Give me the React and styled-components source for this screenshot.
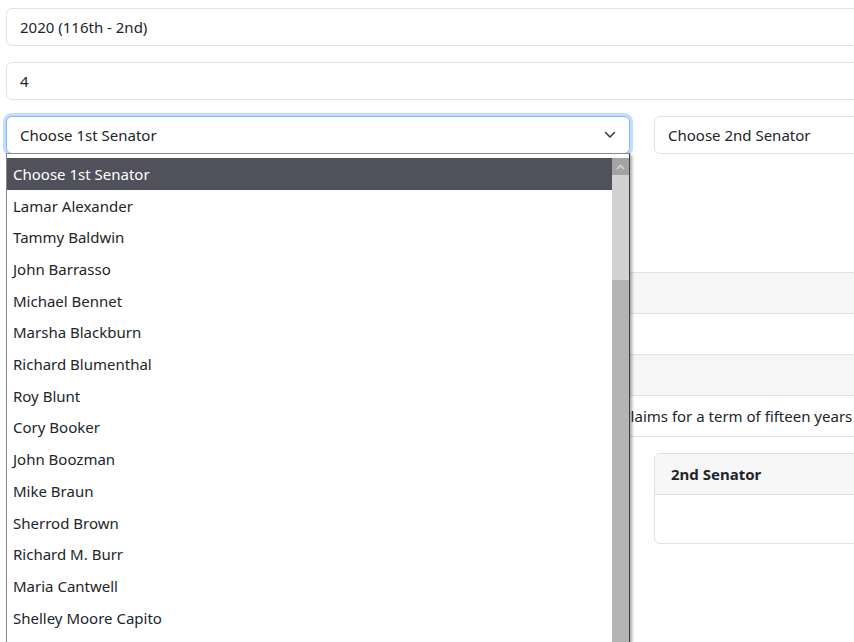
import React from "react";
import styled, { createGlobalStyle } from "styled-components";

const GlobalStyle = createGlobalStyle`
  html { overflow: hidden; }
  html, body { margin: 0; padding: 0; background: #fff; }
  body {
    font-family: "Noto Sans", "Open Sans", sans-serif;
    font-size: 15px;
    color: #212529;
    min-height: 100vh;
  }
  * { box-sizing: border-box; }
`;

const Page = styled.div`
  width: 1272px;
  padding: 8px 0 0 6px;
  display: flex;
  flex-direction: column;
`;

const Field = styled.div`
  height: 38px;
  border: 1px solid #dee2e6;
  border-radius: 6px;
  padding: 0 13px;
  display: flex;
  align-items: center;
  margin-bottom: 16px;
  background: #fff;
`;

const Columns = styled.div`
  display: grid;
  grid-template-columns: 624px 624px;
  column-gap: 24px;
  align-items: start;
`;

const SelectWrap = styled.div`
  position: relative;
`;

const Select = styled.div`
  height: 38px;
  border: 1px solid ${(p) => (p.$focused ? "#86b7fe" : "#dee2e6")};
  box-shadow: ${(p) => (p.$focused ? "0 0 0 3px rgba(13,110,253,0.25)" : "none")};
  border-radius: 6px;
  padding: 0 13px;
  display: flex;
  align-items: center;
  justify-content: space-between;
  background: #fff;
`;

const Chevron = styled.svg`
  width: 16px;
  height: 12px;
  margin-right: -2px;
`;

const Dropdown = styled.div`
  position: absolute;
  left: 0;
  top: 37px;
  width: 624px;
  height: 520px;
  background: #fff;
  border: 1px solid #8a8a8a;
  border-right-color: #3c3c3c;
  box-shadow: 2px 2px 3px rgba(0, 0, 0, 0.35);
  padding-top: 4px;
  display: flex;
  z-index: 10;
`;

const OptionList = styled.div`
  flex: 1;
  display: flex;
  flex-direction: column;
`;

const Option = styled.div`
  height: 31.71px;
  flex: none;
  display: flex;
  align-items: center;
  padding-left: 6px;
  background: ${(p) => (p.$active ? "#51515b" : "transparent")};
  color: ${(p) => (p.$active ? "#fff" : "#212529")};
  white-space: nowrap;
`;

const Scrollbar = styled.div`
  width: 17px;
  display: flex;
  flex-direction: column;
  background: #d0d0d0;
`;

const ScrollArrow = styled.div`
  height: 17px;
  background: #a3a3a3;
  display: flex;
  align-items: center;
  justify-content: center;
`;

const ScrollTrack = styled.div`
  height: 105px;
  background: #d2d2d2;
`;

const ScrollThumb = styled.div`
  flex: 1;
  background: #b4b4b4;
`;

const Table = styled.div`
  margin-top: 118px;
  display: flex;
  flex-direction: column;
  border-top: 1px solid #dee2e6;
`;

const TRow = styled.div`
  height: 41px;
  border-bottom: 1px solid #dee2e6;
  background: ${(p) => (p.$striped ? "#f6f6f6" : "#fff")};
  display: grid;
  grid-template-columns: 100px 1fr;
  align-items: center;
  white-space: nowrap;
`;

const TCell = styled.div`
  padding: 0 8px;
`;

const Cards = styled(Columns)`
  margin-top: 16px;
`;

const Card = styled.div`
  border: 1px solid #dfdfdf;
  border-radius: 6px;
  overflow: hidden;
`;

const CardHeader = styled.div`
  height: 41px;
  padding: 0 16px;
  display: flex;
  align-items: center;
  font-weight: 700;
  background: #f7f7f8;
  border-bottom: 1px solid #dfdfdf;
`;

const CardBody = styled.div`
  height: 48px;
`;

const senators = [
  "Choose 1st Senator",
  "Lamar Alexander",
  "Tammy Baldwin",
  "John Barrasso",
  "Michael Bennet",
  "Marsha Blackburn",
  "Richard Blumenthal",
  "Roy Blunt",
  "Cory Booker",
  "John Boozman",
  "Mike Braun",
  "Sherrod Brown",
  "Richard M. Burr",
  "Maria Cantwell",
  "Shelley Moore Capito",
  "Benjamin L. Cardin",
];

export default function App() {
  return (
    <>
      <GlobalStyle />
      <Page>
        <Field>2020 (116th - 2nd)</Field>
        <Field>4</Field>
        <Columns>
          <SelectWrap>
            <Select $focused>
              <span>Choose 1st Senator</span>
              <Chevron viewBox="0 0 16 12">
                <path d="M3.5 3.5l4.5 4.5 4.5-4.5" fill="none" stroke="#343a40" strokeWidth="1.5" strokeLinecap="round" strokeLinejoin="round" />
              </Chevron>
            </Select>
            <Dropdown>
              <OptionList>
                {senators.map((s, i) => (
                  <Option key={s} $active={i === 0}>{s}</Option>
                ))}
              </OptionList>
              <Scrollbar>
                <ScrollArrow>
                  <svg width="9" height="6" viewBox="0 0 9 6">
                    <path d="M1 5l3.5-3.5L8 5" fill="none" stroke="#d6d6d6" strokeWidth="1.5" />
                  </svg>
                </ScrollArrow>
                <ScrollTrack />
                <ScrollThumb />
              </Scrollbar>
            </Dropdown>
          </SelectWrap>
          <SelectWrap>
            <Select>
              <span>Choose 2nd Senator</span>
            </Select>
          </SelectWrap>
        </Columns>
        <Table>
          <TRow $striped><TCell>Congress</TCell><TCell>116th</TCell></TRow>
          <TRow><TCell>Session</TCell><TCell>2nd</TCell></TRow>
          <TRow $striped><TCell>Vote</TCell><TCell>4</TCell></TRow>
          <TRow>
            <TCell>Question</TCell>
            <TCell>Stephen S. Schwartz, to be a Judge of the United States Court of Federal Claims for a term of fifteen years</TCell>
          </TRow>
        </Table>
        <Cards>
          <Card>
            <CardHeader>1st Senator</CardHeader>
            <CardBody />
          </Card>
          <Card>
            <CardHeader>2nd Senator</CardHeader>
            <CardBody />
          </Card>
        </Cards>
      </Page>
    </>
  );
}
